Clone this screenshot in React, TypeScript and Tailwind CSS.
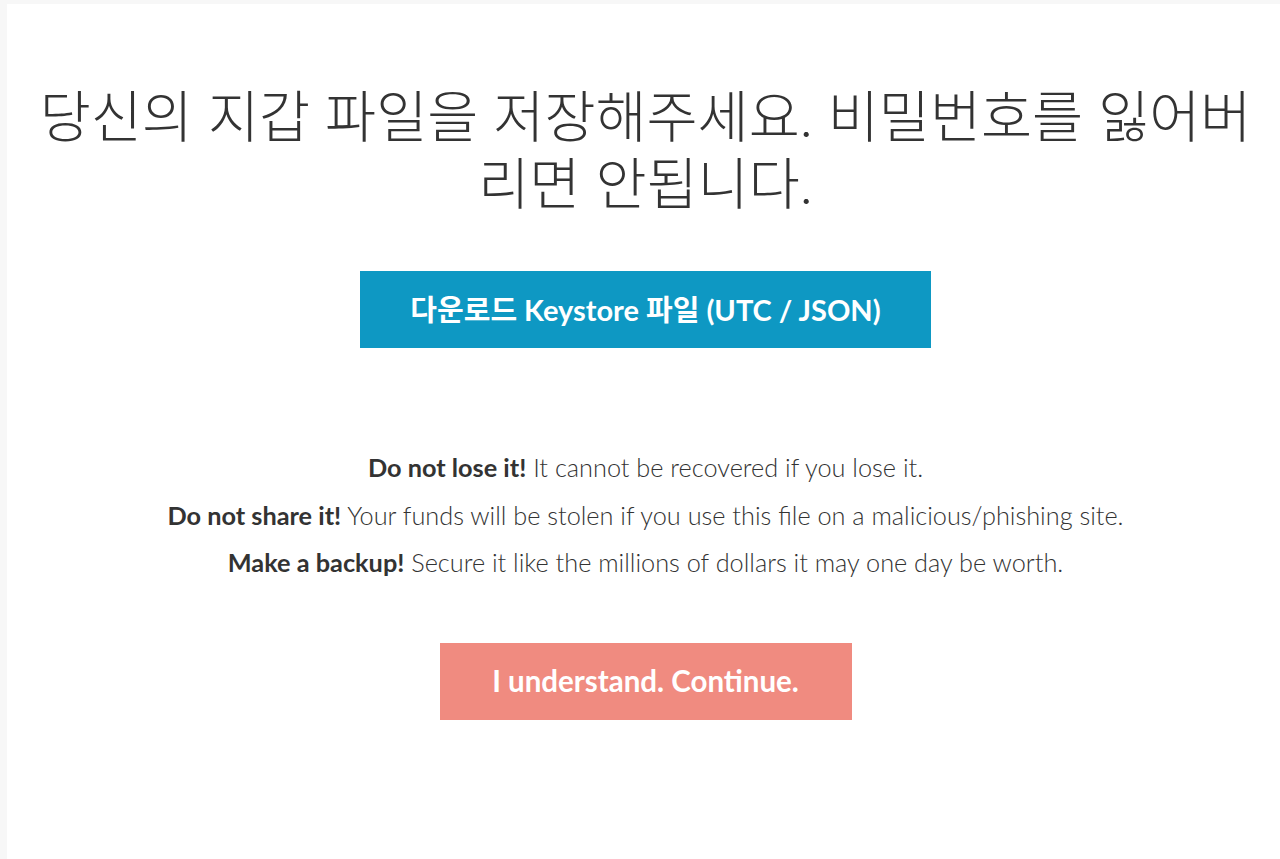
import React from "react";

export default function App() {
  return (
    <div className="min-h-screen bg-[#f7f7f7] pl-[7px] pt-[4px]">
      <div className="flex h-[855px] flex-col items-center bg-white pl-[32px] pr-[28px] pt-[78px] text-[#333333]">
        <h1
          className="text-center text-[55.5px] font-light leading-[67px]"
          style={{ fontFamily: '"Lato", "Noto Sans CJK KR", sans-serif' }}
        >
          당신의 지갑 파일을 저장해주세요. 비밀번호를 잃어버리면 안됩니다.
        </h1>
        <button
          className="mt-[55px] flex h-[77px] w-[571px] shrink-0 items-center justify-center bg-[#0e98c3] text-[29px] font-bold text-white"
          style={{ fontFamily: '"Lato", "Noto Sans CJK KR", sans-serif' }}
        >
          다운로드 Keystore 파일 (UTC / JSON)
        </button>
        <div
          className="mt-[96px] flex flex-col items-center text-[25.3px] font-light leading-[47.5px] text-[#333333]"
          style={{ fontFamily: '"Lato", "Noto Sans CJK KR", sans-serif' }}
        >
          <p>
            <strong className="font-bold">Do not lose it!</strong> It cannot be recovered if you lose it.
          </p>
          <p>
            <strong className="font-bold">Do not share it!</strong> Your funds will be stolen if you use this file on a malicious/phishing site.
          </p>
          <p>
            <strong className="font-bold">Make a backup!</strong> Secure it like the millions of dollars it may one day be worth.
          </p>
        </div>
        <button
          className="mt-[56px] flex h-[77px] w-[412px] shrink-0 items-center justify-center bg-[#f08b80] text-[29.5px] font-bold text-white"
          style={{ fontFamily: '"Lato", sans-serif' }}
        >
          I understand. Continue.
        </button>
      </div>
    </div>
  );
}
